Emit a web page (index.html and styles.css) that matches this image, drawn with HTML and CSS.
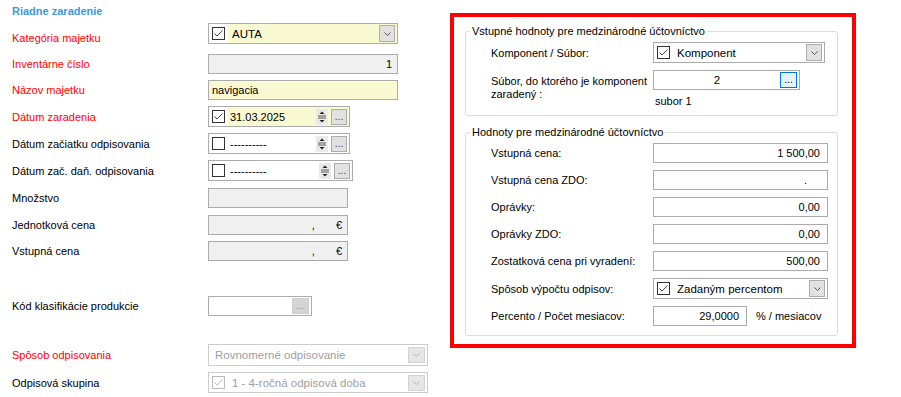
FILE: index.html
```html
<!DOCTYPE html>
<html lang="sk">
<head>
    <meta charset="UTF-8">
    <title>Riadne zaradenie</title>
    <link rel="stylesheet" href="styles.css">
</head>
<body>
<div class="screen">

    <section class="main">
        <div class="section-title">Riadne zaradenie</div>

        <div class="form">
            <div class="row">
                <label class="lbl req lbl-low">Kategória majetku</label>
                <div class="field combo yellow h21 w-190">
                    <span class="chk-cell"><svg class="chk" width="13" height="13" viewBox="0 0 13 13"><rect x="0.5" y="0.5" width="12" height="12" fill="#fff" stroke="#333"/><path d="M2.5 6.5 L5 9 L10.5 3.5" fill="none" stroke="#444"/></svg></span>
                    <span class="combo-text">AUTA</span>
                    <span class="dd-btn"><svg width="7" height="4" viewBox="0 0 7 4"><path d="M0.5 0.5 L3.5 3.5 L6.5 0.5" fill="none" stroke="#555"/></svg></span>
                </div>
            </div>

            <div class="row row-sep">
                <label class="lbl req">Inventárne číslo</label>
                <div class="field ro w-190 val-right">1</div>
            </div>

            <div class="row">
                <label class="lbl req">Názov majetku</label>
                <div class="field yellow w-190 val-left">navigacia</div>
            </div>

            <div class="row">
                <label class="lbl req">Dátum zaradenia</label>
                <div class="field date yellow h21 w-142">
                    <span class="chk-cell"><svg class="chk" width="13" height="13" viewBox="0 0 13 13"><rect x="0.5" y="0.5" width="12" height="12" fill="#fff" stroke="#333"/><path d="M2.5 6.5 L5 9 L10.5 3.5" fill="none" stroke="#444"/></svg></span>
                    <span class="date-text">31.03.2025</span>
                    <span class="spin"><svg width="12" height="16" viewBox="0 0 12 16"><rect width="12" height="7.5" fill="#e9e9e9"/><rect y="8.5" width="12" height="7.5" fill="#e9e9e9"/><path d="M3.5 5 L6 2.5 L8.5 5 Z" fill="#222"/><path d="M3.5 11 L8.5 11 L6 13.5 Z" fill="#222"/><path d="M2 7 H10 M2 9 H10" stroke="#555"/></svg></span>
                    <span class="ell-btn">...</span>
                </div>
            </div>

            <div class="row">
                <label class="lbl">Dátum začiatku odpisovania</label>
                <div class="field date h21 w-142">
                    <span class="chk-cell"><svg class="chk" width="13" height="13" viewBox="0 0 13 13"><rect x="0.5" y="0.5" width="12" height="12" fill="#fff" stroke="#333"/></svg></span>
                    <span class="date-text">----------</span>
                    <span class="spin"><svg width="12" height="16" viewBox="0 0 12 16"><rect width="12" height="7.5" fill="#e9e9e9"/><rect y="8.5" width="12" height="7.5" fill="#e9e9e9"/><path d="M3.5 5 L6 2.5 L8.5 5 Z" fill="#222"/><path d="M3.5 11 L8.5 11 L6 13.5 Z" fill="#222"/><path d="M2 7 H10 M2 9 H10" stroke="#555"/></svg></span>
                    <span class="ell-btn">...</span>
                </div>
            </div>

            <div class="row">
                <label class="lbl">Dátum zač. daň. odpisovania</label>
                <div class="field date h21 w-145">
                    <span class="chk-cell"><svg class="chk" width="13" height="13" viewBox="0 0 13 13"><rect x="0.5" y="0.5" width="12" height="12" fill="#fff" stroke="#333"/></svg></span>
                    <span class="date-text">----------</span>
                    <span class="spin"><svg width="12" height="16" viewBox="0 0 12 16"><rect width="12" height="7.5" fill="#e9e9e9"/><rect y="8.5" width="12" height="7.5" fill="#e9e9e9"/><path d="M3.5 5 L6 2.5 L8.5 5 Z" fill="#222"/><path d="M3.5 11 L8.5 11 L6 13.5 Z" fill="#222"/><path d="M2 7 H10 M2 9 H10" stroke="#555"/></svg></span>
                    <span class="ell-btn">...</span>
                </div>
            </div>

            <div class="row row-loose">
                <label class="lbl">Množstvo</label>
                <div class="field ro w-140"></div>
            </div>

            <div class="row row-loose">
                <label class="lbl">Jednotková cena</label>
                <div class="field ro w-140 val-right"><span class="sep">,</span>€</div>
            </div>

            <div class="row">
                <label class="lbl">Vstupná cena</label>
                <div class="field ro w-140 val-right"><span class="sep">,</span>€</div>
            </div>

            <div class="row row-kod">
                <label class="lbl">Kód klasifikácie produkcie</label>
                <div class="field w-104">
                    <span class="ell-btn off">...</span>
                </div>
            </div>

            <div class="row row-odp">
                <label class="lbl req">Spôsob odpisovania</label>
                <div class="field combo disabled h22 w-220">
                    <span class="combo-text plain">Rovnomerné odpisovanie</span>
                    <span class="dd-btn off"><svg width="7" height="4" viewBox="0 0 7 4"><path d="M0.5 0.5 L3.5 3.5 L6.5 0.5" fill="none" stroke="#b5b5b5"/></svg></span>
                </div>
            </div>

            <div class="row">
                <label class="lbl">Odpisová skupina</label>
                <div class="field combo disabled h21 w-220">
                    <span class="chk-cell"><svg class="chk" width="13" height="13" viewBox="0 0 13 13"><rect x="0.5" y="0.5" width="12" height="12" fill="#fff" stroke="#bcbcbc"/><path d="M2.5 6.5 L5 9 L10.5 3.5" fill="none" stroke="#bcbcbc"/></svg></span>
                    <span class="combo-text">1 - 4-ročná odpisová doba</span>
                    <span class="dd-btn off"><svg width="7" height="4" viewBox="0 0 7 4"><path d="M0.5 0.5 L3.5 3.5 L6.5 0.5" fill="none" stroke="#b5b5b5"/></svg></span>
                </div>
            </div>
        </div>
    </section>

    <section class="intl">
        <fieldset class="group">
            <legend>Vstupné hodnoty pre medzinárodné účtovníctvo</legend>

            <div class="irow">
                <label class="ilbl">Komponent / Súbor:</label>
                <div class="field combo h21 w-172">
                    <span class="chk-cell"><svg class="chk" width="13" height="13" viewBox="0 0 13 13"><rect x="0.5" y="0.5" width="12" height="12" fill="#fff" stroke="#333"/><path d="M2.5 6.5 L5 9 L10.5 3.5" fill="none" stroke="#444"/></svg></span>
                    <span class="combo-text">Komponent</span>
                    <span class="dd-btn"><svg width="7" height="4" viewBox="0 0 7 4"><path d="M0.5 0.5 L3.5 3.5 L6.5 0.5" fill="none" stroke="#555"/></svg></span>
                </div>
            </div>

            <div class="irow top">
                <label class="ilbl two-line">Súbor, do ktorého je komponent zaradený :</label>
                <div class="stack">
                    <div class="field w-147">
                        <span class="center-text">2</span>
                        <span class="ell-btn blue">...</span>
                    </div>
                    <div class="note">subor 1</div>
                </div>
            </div>
        </fieldset>

        <fieldset class="group group-values">
            <legend>Hodnoty pre medzinárodné účtovníctvo</legend>

            <div class="irow">
                <label class="ilbl">Vstupná cena:</label>
                <div class="field w-175 val-right num">1 500,00</div>
            </div>
            <div class="irow">
                <label class="ilbl">Vstupná cena ZDO:</label>
                <div class="field w-175 val-right dot">.</div>
            </div>
            <div class="irow">
                <label class="ilbl">Oprávky:</label>
                <div class="field w-175 val-right num">0,00</div>
            </div>
            <div class="irow">
                <label class="ilbl">Oprávky ZDO:</label>
                <div class="field w-175 val-right num">0,00</div>
            </div>
            <div class="irow">
                <label class="ilbl">Zostatková cena pri vyradení:</label>
                <div class="field w-175 val-right num">500,00</div>
            </div>
            <div class="irow">
                <label class="ilbl">Spôsob výpočtu odpisov:</label>
                <div class="field combo h21 w-175">
                    <span class="chk-cell"><svg class="chk" width="13" height="13" viewBox="0 0 13 13"><rect x="0.5" y="0.5" width="12" height="12" fill="#fff" stroke="#333"/><path d="M2.5 6.5 L5 9 L10.5 3.5" fill="none" stroke="#444"/></svg></span>
                    <span class="combo-text">Zadaným percentom</span>
                    <span class="dd-btn"><svg width="7" height="4" viewBox="0 0 7 4"><path d="M0.5 0.5 L3.5 3.5 L6.5 0.5" fill="none" stroke="#555"/></svg></span>
                </div>
            </div>
            <div class="irow">
                <label class="ilbl">Percento / Počet mesiacov:</label>
                <div class="field w-94 val-right num">29,0000</div>
                <span class="unit">% / mesiacov</span>
            </div>
        </fieldset>
    </section>

</div>
</body>
</html>
```

FILE: styles.css
```css
* {
    box-sizing: border-box;
}
body {
    margin: 0;
    width: 901px;
    height: 397px;
    overflow: hidden;
    background: #fff;
    color: #000;
    font-family: 'Liberation Sans', Arial, sans-serif;
    font-size: 11px;
}
.screen {
    display: flex;
    align-items: flex-start;
}

/* left column */
.main {
    width: 450px;
    padding-left: 11px;
}
.section-title {
    height: 22px;
    line-height: 22px;
    padding-left: 1px;
    font-weight: bold;
    color: #3a9ad9;
}
.form {
    display: flex;
    flex-direction: column;
    gap: 6px;
    margin-top: 1px;
}
.row {
    display: flex;
    align-items: center;
}
.row-sep {
    margin-top: 4px;
}
.row-loose {
    margin-top: 1px;
}
.row-kod {
    margin-top: 29px;
}
.row-odp {
    margin-top: 22px;
}
.lbl {
    flex: 0 0 197px;
    padding-left: 1px;
}
.lbl-low {
    padding-top: 8px;
}
.req {
    color: #ff0000;
}

/* inputs */
.field {
    display: flex;
    align-items: center;
    height: 20px;
    border: 1px solid #ababab;
    background: #fff;
    white-space: nowrap;
}
.field.h21 { height: 21px; }
.field.h22 { height: 22px; }
.field.ro { background: #f0f0f0; }
.field.yellow { background: #fafad2; }
.field.disabled {
    border-color: #cccccc;
    color: #a0a0a0;
}
.w-94 { width: 94px; }
.w-104 { width: 104px; }
.w-140 { width: 140px; }
.w-142 { width: 142px; }
.w-145 { width: 145px; }
.w-147 { width: 147px; }
.w-172 { width: 172px; }
.w-175 { width: 175px; }
.w-190 { width: 190px; }
.w-220 { width: 220px; }

.val-right {
    justify-content: flex-end;
    padding-right: 5px;
}
.val-right.num {
    padding-right: 7px;
}
.val-right.dot {
    padding-right: 20px;
}
.val-left {
    padding-left: 3px;
}
.sep {
    margin-right: 21px;
}

.chk-cell {
    display: flex;
    align-items: center;
    width: 19px;
    height: 100%;
    padding-left: 3px;
    background: #fff;
}
.chk {
    display: block;
}
.combo-text {
    flex: 1;
    padding-left: 4px;
    font-size: 11.5px;
}
.combo-text.plain {
    padding-left: 6px;
}
.dd-btn {
    display: flex;
    align-items: center;
    justify-content: center;
    width: 16px;
    height: 17px;
    margin-right: 2px;
    border: 1px solid #adadad;
    background: #e1e1e1;
}
.dd-btn.off {
    width: 17px;
    height: 16px;
    border-color: #d4d4d4;
    background: #e6e6e6;
}

.date-text {
    padding-left: 2px;
}
.spin {
    display: flex;
    margin-left: auto;
    margin-right: 3px;
}
.ell-btn {
    display: flex;
    align-items: flex-end;
    justify-content: center;
    width: 16px;
    height: 16px;
    margin-right: 2px;
    padding-bottom: 2px;
    border: 1px solid #adadad;
    background: #e1e1e1;
    color: #4a2c6e;
    font-size: 10px;
    line-height: 10px;
}
.ell-btn.off {
    margin-left: auto;
    width: 17px;
    border-color: #cfcfcf;
    background: #d4d4d4;
    color: #909090;
}
.ell-btn.blue {
    width: 17px;
    height: 16px;
    border-color: #0078d7;
    background: #e5f1fb;
    color: #000;
}

/* right panel */
.intl {
    width: 406px;
    height: 335px;
    margin-top: 13px;
    padding: 8px 14px 0 11px;
    border: 4px solid #ff0000;
}
.group {
    margin: 0;
    min-width: 0;
    padding: 4px 0 7px 4px;
    border: 1px solid #dcdcdc;
    border-radius: 3px;
}
.group legend {
    padding: 0 2px;
    line-height: 13px;
}
.group-values {
    margin-top: 10px;
    padding-bottom: 9px;
}
.irow {
    display: flex;
    align-items: center;
    padding-left: 21px;
}
.irow + .irow {
    margin-top: 7px;
}
.irow.top {
    align-items: flex-start;
}
.ilbl {
    flex: 0 0 162px;
}
.two-line {
    width: 162px;
    padding-top: 5px;
    padding-right: 4px;
    line-height: 13px;
}
.stack {
    display: flex;
    flex-direction: column;
}
.center-text {
    flex: 1;
    text-align: center;
    font-size: 11.5px;
}
.note {
    margin-top: 5px;
    padding-left: 2px;
    line-height: 13px;
}
.unit {
    margin-left: 9px;
}
```
